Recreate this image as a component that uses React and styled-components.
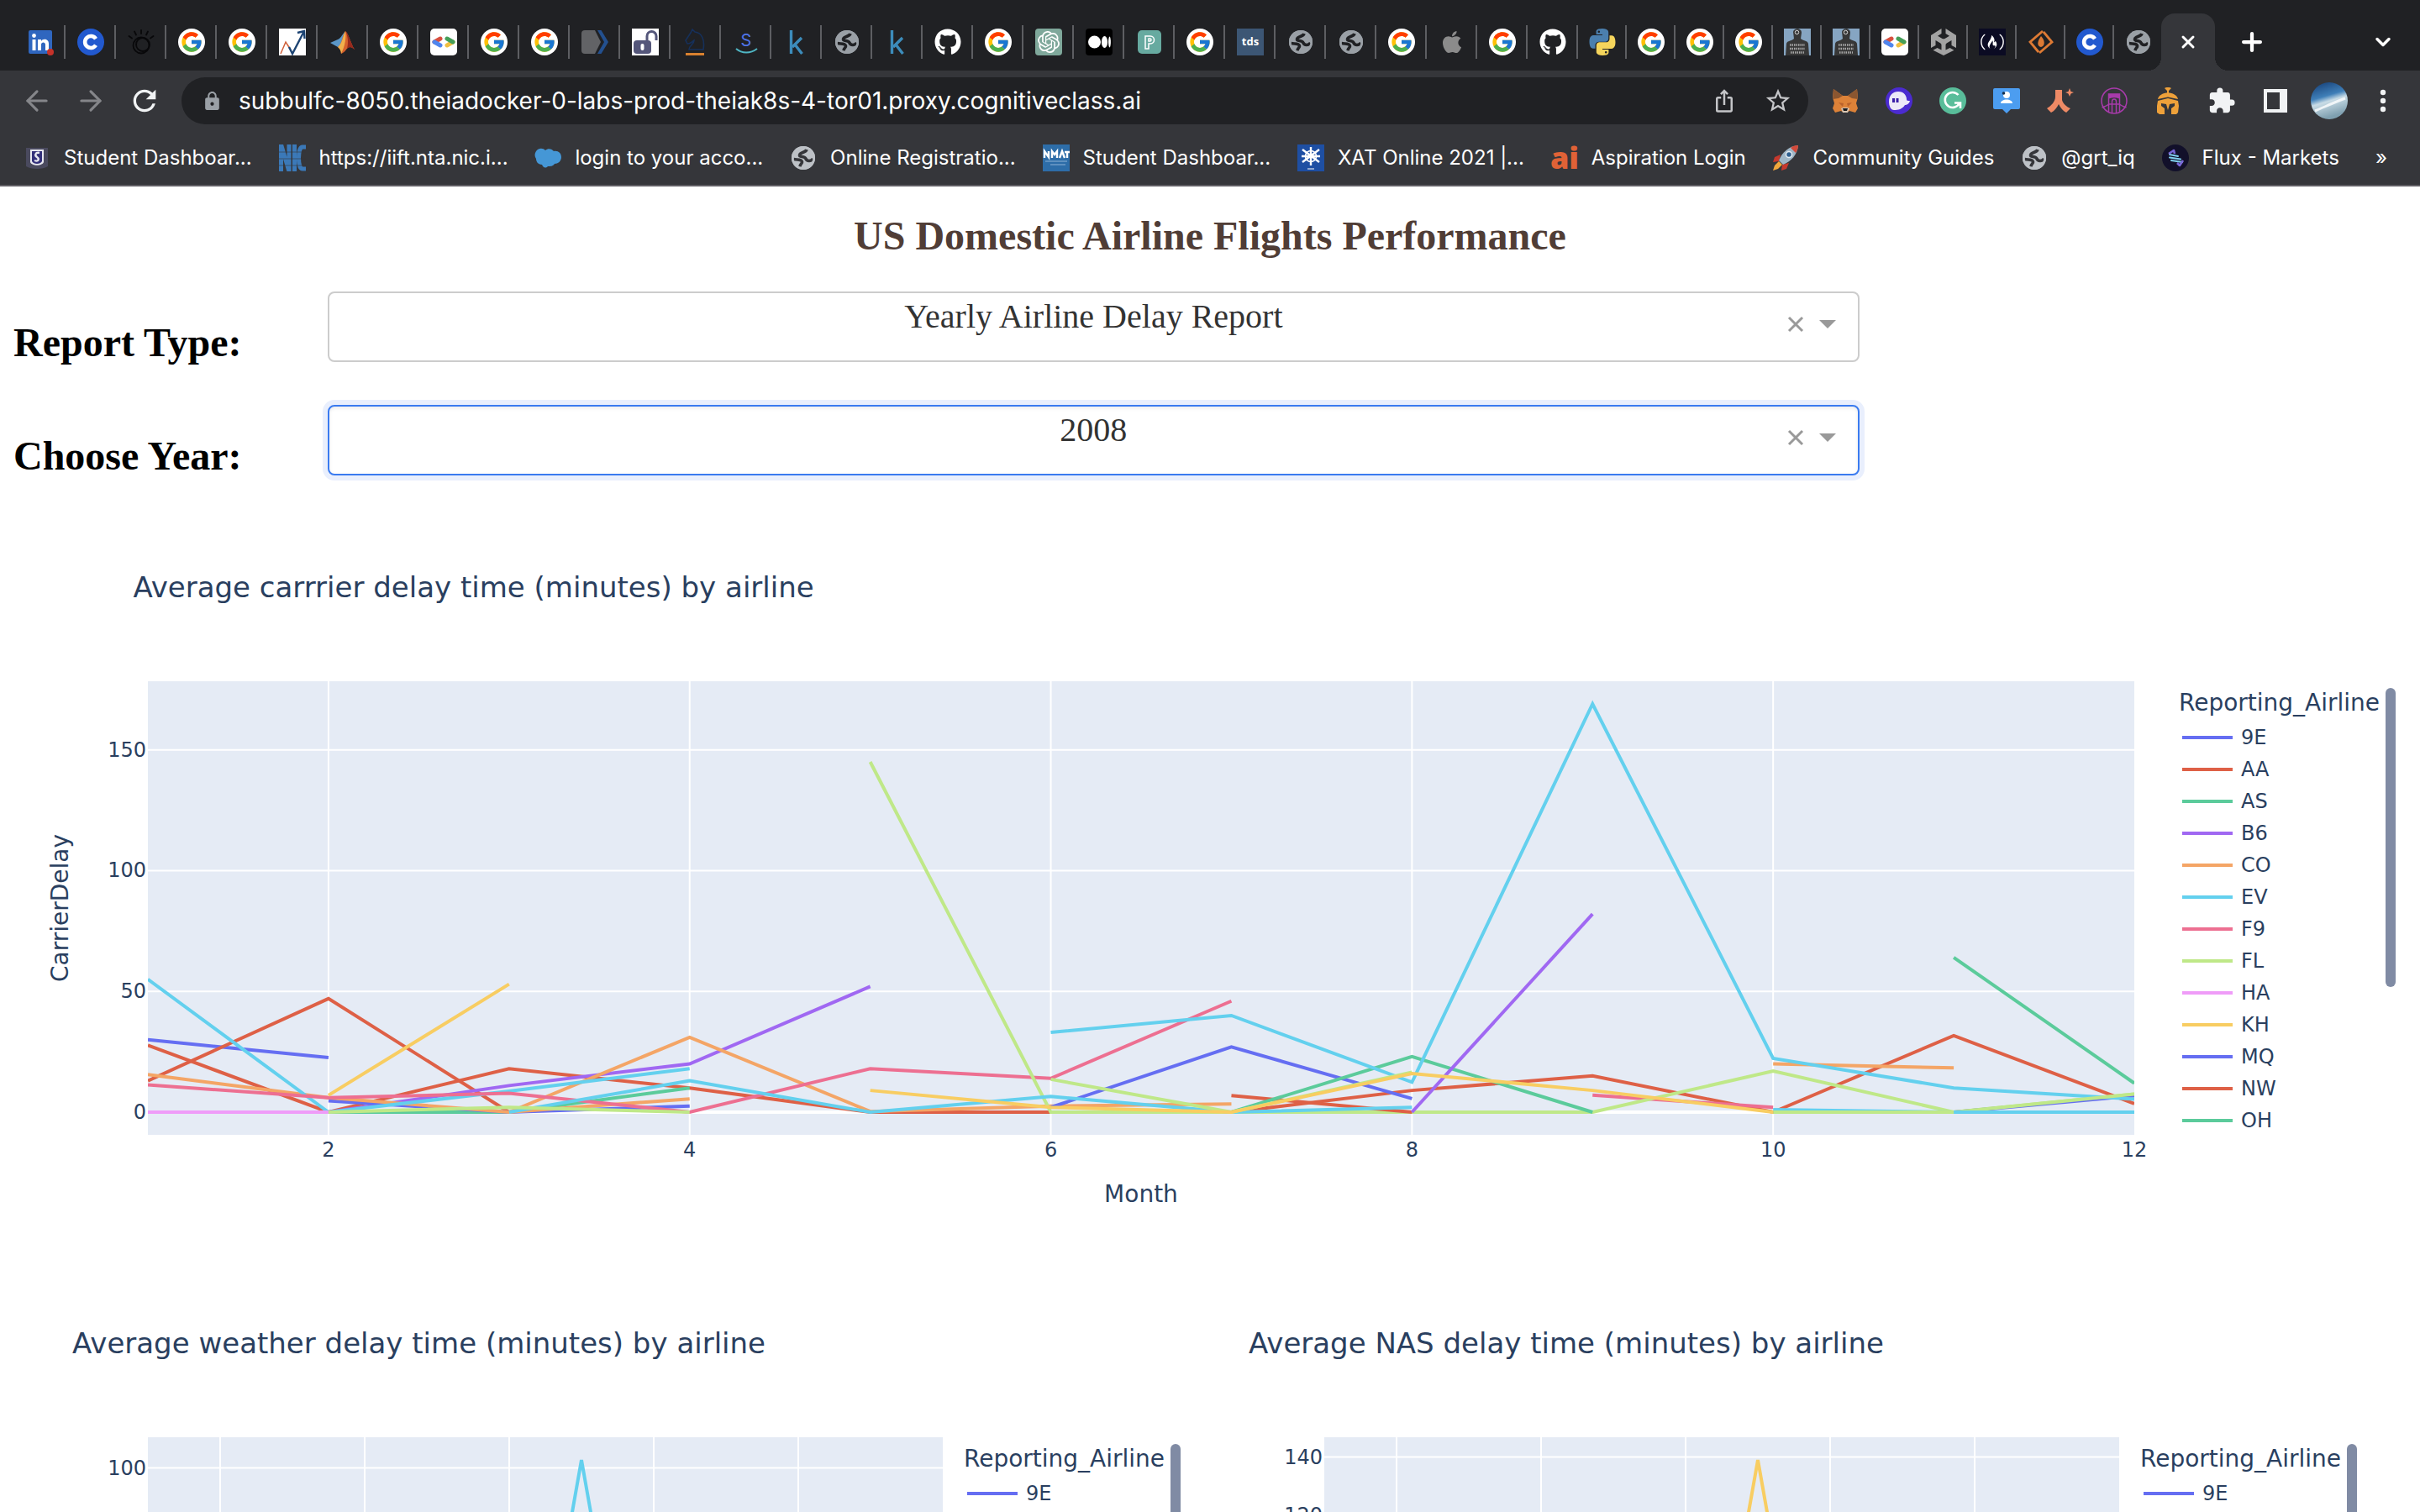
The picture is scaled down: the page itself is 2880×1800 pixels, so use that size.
import React from "react";
import styled, { createGlobalStyle } from "styled-components";
import { FcGoogle } from "react-icons/fc";
import { FaApple, FaFreeCodeCamp, FaGithub } from "react-icons/fa";
import { SiOpenai } from "react-icons/si";
import { MdExtension, MdIosShare, MdStarBorder, MdLock, MdRefresh } from "react-icons/md";
import { ArrowLeft, ArrowRight, ChevronDown, Plus, X } from "lucide-react";

const GlobalStyle = createGlobalStyle`
  * { box-sizing: border-box; }
  body { margin: 0; background: #ffffff; }
  button, input, select { font: inherit; color: inherit; }
  button { padding: 0; border: 0; background: none; }
`;

const ui = '"Inter", "Roboto", sans-serif';
const serif = '"Liberation Serif", "Times New Roman", serif';
const plotFont = '"DejaVu Sans", Verdana, sans-serif';

/* ---------- browser window ---------- */

const Window = styled.div`
  display: flex;
  flex-direction: column;
  height: 100vh;
  overflow: hidden;
`;

const TabStrip = styled.nav`
  display: flex;
  align-items: stretch;
  height: 84px;
  padding: 16px 0 0 18px;
  background: #202124;
`;

const Tab = styled.button`
  display: flex;
  align-items: center;
  justify-content: center;
  flex: none;
  width: ${(p) => (p.$narrow ? 58 : 60)}px;
  background: linear-gradient(#5d5e62, #5d5e62) right center / 2px 40px no-repeat;
  &:nth-last-child(4) {
    background: none;
  }
`;

const ActiveTab = styled.button`
  display: flex;
  align-items: center;
  justify-content: center;
  flex: none;
  width: 64px;
  margin-left: -2px;
  border-radius: 16px 16px 0 0;
  background: #35363a;
  color: #ffffff;
  position: relative;
  &::before,
  &::after {
    content: "";
    position: absolute;
    bottom: 0;
    width: 16px;
    height: 16px;
  }
  &::before {
    right: 100%;
    background: radial-gradient(circle at 0 0, #202124 16px, #35363a 16px);
  }
  &::after {
    left: 100%;
    background: radial-gradient(circle at 100% 0, #202124 16px, #35363a 16px);
  }
`;

const StripButton = styled.button`
  display: flex;
  align-items: center;
  justify-content: center;
  width: 88px;
  color: #ffffff;
  margin-left: ${(p) => (p.$end ? "auto" : "0")};
`;

const Toolbar = styled.div`
  display: flex;
  align-items: center;
  gap: 12px;
  height: 72px;
  padding: 0 12px;
  background: #35363a;
`;

const ButtonGroup = styled.div`
  display: flex;
`;

const ToolButton = styled.button`
  display: flex;
  align-items: center;
  justify-content: center;
  width: 64px;
  height: 56px;
  color: ${(p) => p.$color || "#f1f3f4"};
`;

const AddressBar = styled.div`
  display: flex;
  align-items: center;
  flex: 1;
  height: 56px;
  padding: 0 4px 0 20px;
  border-radius: 28px;
  background: #202124;
  color: #9aa0a6;
`;

const LockBox = styled.span`
  display: flex;
  justify-content: center;
  width: 32px;
  margin-right: 16px;
`;

const UrlInput = styled.input`
  flex: 1;
  min-width: 0;
  padding: 0;
  border: 0;
  outline: 0;
  background: none;
  color: #ffffff;
  font: 400 28px/40px ${ui};
`;

const BookmarkBar = styled.nav`
  display: flex;
  align-items: center;
  gap: 18px;
  height: 66px;
  padding: 0 14px 0 28px;
  border-bottom: 2px solid #5f5d63;
  background: #35363a;
  color: #ffffff;
  font: 400 24px/32px ${ui};
`;

const BookmarkList = styled.div`
  display: flex;
  flex: 1;
  justify-content: space-between;
`;

const Bookmark = styled.a`
  display: flex;
  align-items: center;
  gap: 16px;
  color: inherit;
  text-decoration: none;
  white-space: nowrap;
`;

const MoreButton = styled.button`
  width: 64px;
`;

/* ---------- dashboard page ---------- */

const Page = styled.main`
  flex: 1;
  min-height: 0;
  overflow: auto;
  scrollbar-width: none;
  padding: 30px 16px 0;
`;

const PageTitle = styled.h1`
  margin: 0 0 37px;
  color: #503d36;
  text-align: center;
  font: 700 48px/58px ${serif};
`;

const FilterRow = styled.div`
  display: grid;
  grid-template-columns: 374px 64%;
  align-items: start;
  height: 90px;
  margin-bottom: ${(p) => (p.$last ? 39 : 45)}px;
`;

const FilterLabel = styled.label`
  padding-top: 32px;
  color: #000000;
  font: 700 48px/58px ${serif};
`;

const SelectBox = styled.div`
  position: relative;
`;

const Select = styled.select`
  display: block;
  width: 100%;
  height: 84px;
  padding: 0 0 24px;
  appearance: none;
  border: 2px solid ${(p) => (p.$focused ? "#3a7bf0" : "#cccccc")};
  border-radius: 8px;
  box-shadow: ${(p) =>
    p.$focused ? "inset 0 2px 4px rgba(0, 0, 0, 0.08), 0 0 0 6px #e9effd" : "none"};
  background: #ffffff;
  outline: 0;
  color: #333333;
  text-align: center;
  text-align-last: center;
  font: 400 40px/48px ${serif};
`;

const SelectControls = styled.div`
  position: absolute;
  top: 0;
  right: 28px;
  display: flex;
  align-items: center;
  gap: 18px;
  height: 78px;
  pointer-events: none;
`;

const ClearButton = styled.button`
  display: flex;
  color: #999999;
`;

const ChartRow = styled.div`
  display: grid;
  grid-template-columns: 1fr 1fr;
  padding-right: 48px;
`;

const ChartFigure = styled.figure`
  height: 900px;
  margin: 0;
  font-family: ${plotFont};
  color: #2a3f5f;
`;

const ChartTitle = styled.figcaption`
  height: 200px;
  padding: 68px 5% 0;
  white-space: nowrap;
  font-size: 34px;
  line-height: 40px;
`;

const ChartBody = styled.div`
  display: grid;
  grid-template-columns: 160px 1fr ${(p) => (p.$wide ? 324 : 294)}px;
  height: 540px;
`;

const PlotCell = styled.div`
  grid-column: 2;
`;

const PlotSvg = styled.svg`
  display: block;
  width: 100%;
  height: 540px;
  overflow: visible;
  fill: #2a3f5f;
  font-family: ${plotFont};
`;

const Legend = styled.div`
  display: flex;
  gap: 6px;
  padding: 8px 0 0 ${(p) => (p.$wide ? 53 : 25)}px;
`;

const LegendBody = styled.div`
  width: 240px;
`;

const LegendTitle = styled.div`
  margin-bottom: 4px;
  white-space: nowrap;
  font-size: 28px;
  line-height: 36px;
`;

const LegendList = styled.ul`
  margin: 0;
  padding: 0 0 0 4px;
  list-style: none;
`;

const LegendItem = styled.li`
  display: flex;
  align-items: center;
  gap: 10px;
  height: 38px;
  font-size: 24px;
  &::before {
    content: "";
    width: 60px;
    height: 4px;
    background: ${(p) => p.$color};
  }
`;

const LegendBar = styled.div`
  width: 12px;
  height: 356px;
  border-radius: 6px;
  background: #808ba4;
`;

/* ---------- icons ---------- */

const Icon = styled.svg`
  display: block;
  flex: none;
  width: ${(p) => p.$size || 32}px;
  height: ${(p) => p.$size || 32}px;
`;

const RoundIcon = styled.span`
  display: flex;
  align-items: center;
  justify-content: center;
  width: 32px;
  height: 32px;
  border-radius: ${(p) => p.$radius || "50%"};
  background: ${(p) => p.$bg || "#ffffff"};
  color: ${(p) => p.$color || "#ffffff"};
`;

const Google = () => (
  <RoundIcon>
    <FcGoogle size={28} />
  </RoundIcon>
);

const Globe = ({ color = "#9aa0a6", hole = "#202124" }) => (
  <Icon viewBox="0 0 32 32">
    <circle cx="16" cy="16" r="14" fill={color} />
    <path
      d="M20 6c-1 4-8 3-8.500 6.500-.5 3 6 1 7.500 4.500 1.200 3 6 3.500 8.500 0"
      fill="none"
      stroke={hole}
      strokeWidth="3.600"
    />
    <path d="M4.500 17.500c4 1 9-.5 10 3 .6 2.500-2.500 2.500-2.500 6" fill="none" stroke={hole} strokeWidth="3.600" />
    <circle cx="16" cy="16" r="12.700" fill="none" stroke={color} strokeWidth="2.600" />
  </Icon>
);

const Coursera = () => (
  <Icon viewBox="0 0 32 32">
    <circle cx="16" cy="16" r="16" fill="#2259cf" />
    <path d="M22 12.200a7 7 0 1 0 0 7.600" fill="none" stroke="#fff" strokeWidth="4.600" />
  </Icon>
);

const LinkedIn = () => (
  <Icon viewBox="0 0 32 32">
    <rect x="2" y="2" width="28" height="28" rx="2" fill="#2f66bf" />
    <path d="M6.500 13h4v13h-4zM13 13h4v2c2-3.500 9-3 9 3v8h-4v-7c0-3.500-5-3.500-5 0v7h-4z" fill="#fff" />
    <circle cx="8.500" cy="8.500" r="2.400" fill="#fff" />
    <circle cx="28" cy="28" r="4" fill="#c5322a" />
  </Icon>
);

const Watson = () => (
  <Icon viewBox="0 0 32 32" fill="none" stroke="#08080a" strokeWidth="1.800" strokeLinecap="round">
    <circle cx="16" cy="20" r="9.500" />
    <circle cx="18" cy="19" r="8" />
    <path d="M16 2v4M8 3.500l2 4M24 3.500l-2 4M1.500 9l3.500 2.500M30.500 9 27 11.500" />
  </Icon>
);

const TrendChart = () => (
  <Icon viewBox="0 0 32 32">
    <path d="M0 0h32v32H0z" fill="#fff" />
    <path d="m2 30 6-14 4.500 7" fill="none" stroke="#d0603a" strokeWidth="1.500" />
    <path d="m12 22 4 8L30 3M22 5l8-2 .5 9" fill="none" stroke="#1c4372" strokeWidth="2.400" />
  </Icon>
);

const Matlab = () => (
  <Icon viewBox="0 0 32 32">
    <path d="m1 17 9-4c3-1 5-5 8-9l-3 15-5 3z" fill="#5b96c6" />
    <path d="M19 3c4 3 6 14 11 22-4-4-7-4-10 0-2 3-4 4-6 5 0-4-2-7-4-8 5-3 5-13 9-19z" fill="#d5602c" />
    <path d="M19 3c1 8 0 17-5 27 0-4-2-6-4-8 5-3 6-13 9-19z" fill="#f1b04c" />
    <path d="M19 3c3 5 4 14 2 21 3-3 6-2 9 1C25 17 23 6 19 3z" fill="#98291d" />
  </Icon>
);

const DevSite = () => (
  <Icon viewBox="0 0 32 32" strokeWidth="5" strokeLinecap="round">
    <rect width="32" height="32" rx="5" fill="#fff" />
    <path d="m12 12-7 4" stroke="#d8503f" />
    <path d="m5 16 7 4" stroke="#4f86ee" />
    <path d="m20 20 7-4" stroke="#f1bf42" />
    <path d="m27 16-7-4" stroke="#459f58" />
  </Icon>
);

const HexTag = () => (
  <Icon viewBox="0 0 32 32">
    <path d="M4 2h12l7 14-7 14H4a4 4 0 0 1-4-4V6a4 4 0 0 1 4-4z" fill="#626366" />
    <path d="M19 2h4.500L32 16l-8.500 14H19l8-14z" fill="#23508f" />
  </Icon>
);

const OpenLock = () => (
  <Icon viewBox="0 0 32 32">
    <path d="M0 0h32v32H0z" fill="#fff" />
    <rect x="2" y="14" width="21" height="16" rx="4" fill="#54567a" />
    <path d="M18 15V9a5.500 5.500 0 0 1 11 0v5" fill="none" stroke="#54567a" strokeWidth="3" />
    <rect x="10.500" y="18" width="4" height="8" rx="2" fill="#fff" />
  </Icon>
);

const Knight = () => (
  <Icon viewBox="0 0 32 32">
    <path
      d="M8 25c0-5 6-6 6-11-3 2-4 4-8 4l-2-4 6-9 2-4 3 3c8 1 12 9 10 21z"
      fill="none"
      stroke="#16305a"
      strokeWidth="1.600"
    />
    <path d="M4 29h22v3H4z" fill="#d9812f" />
  </Icon>
);

const LetterS = () => (
  <Icon viewBox="0 0 32 32">
    <text x="16" y="21" textAnchor="middle" fontFamily="Inter, sans-serif" fontSize="20" fill="#4f74e8">
      S
    </text>
    <path d="M4 24c7 6 17 6 25 0" fill="none" stroke="#4fb6c4" strokeWidth="2" />
  </Icon>
);

const Kaggle = () => (
  <Icon viewBox="0 0 32 32">
    <path d="M9.500 2v28M22 11 11 22M14 19l8.500 11" fill="none" stroke="#3c8cbb" strokeWidth="3.400" />
  </Icon>
);

const MediumMark = () => (
  <Icon viewBox="0 0 32 32">
    <rect width="32" height="32" rx="4" />
    <ellipse cx="10.500" cy="16" rx="7.500" ry="7.500" fill="#fff" />
    <ellipse cx="22.500" cy="16" rx="3.600" ry="7" fill="#fff" />
    <ellipse cx="28.500" cy="16" rx="1.400" ry="6.500" fill="#fff" />
  </Icon>
);

const LetterP = () => (
  <Icon viewBox="0 0 32 32">
    <rect x="2" y="2" width="28" height="28" rx="5" fill="#67aaa0" />
    <path d="M11 24V9h6c6 0 6 9 0 9h-2v6zM15 12v3h1.500c2 0 2-3 0-3z" fill="none" stroke="#fff" strokeWidth="1.500" />
  </Icon>
);

const Tds = () => (
  <Icon viewBox="0 0 32 32">
    <path d="M0 0h32v32H0z" fill="#3c5674" />
    <text x="16" y="20" textAnchor="middle" fontFamily="Open Sans, sans-serif" fontWeight="700" fontSize="13" fill="#fff">
      tds
    </text>
  </Icon>
);

const Python = () => (
  <Icon viewBox="0 0 32 32">
    <path
      d="M15.800 0C8 0 8.600 3.500 8.600 3.500v3.600H16v1H5.500S.5 7.500.5 15.800s4.400 8 4.400 8h2.600v-3.700s-.1-4.400 4.300-4.400h7.300s4.100.1 4.100-4V4.500S23.800 0 15.800 0zm-4 2.400a1.300 1.300 0 1 1 0 2.600 1.300 1.300 0 0 1 0-2.600z"
      fill="#4b7fae"
    />
    <path
      d="M16.200 32c7.800 0 7.200-3.500 7.200-3.500v-3.600H16v-1h10.500s5 .6 5-7.700-4.400-8-4.400-8h-2.600v3.700s.1 4.400-4.300 4.400h-7.300s-4.100-.1-4.100 4v7.200s-.6 4.500 7.400 4.500zm4-2.400a1.300 1.300 0 1 1 0-2.600 1.300 1.300 0 0 1 0 2.600z"
      fill="#f5d55c"
    />
  </Icon>
);

const Mastery = () => (
  <Icon viewBox="0 0 32 32">
    <path d="M0 0h32v32H0z" fill="#86a5c2" />
    <path d="M11 4c1-5 10-5 10 1l-1 7c4 3 8 2 9 6l1 14H2l1-14c1-4 6-3 9-6z" fill="#373737" />
    <circle cx="15.500" cy="4.500" r="2.200" fill="none" stroke="#ddd" />
    <path d="M7 19.500h18M7 24h18M8 28.500h16" stroke="#a8a8a8" strokeWidth="2.400" strokeDasharray="1.500 1" />
  </Icon>
);

const Flame = () => (
  <Icon viewBox="0 0 32 32" fill="none" stroke="#dd7a34" strokeWidth="2.800">
    <path d="M18 3 3 16l10 12M14 29l15-13L19 4" />
    <path d="M16 9c5 5 5 12 0 13-5-1-5-6 0-13z" fill="#dd7a34" stroke="none" />
  </Icon>
);

const UnityCube = () => (
  <Icon viewBox="0 0 32 32" fill="#a3a3a3">
    <path d="M13.500 0v6L9 8.700l5.500 3.200c.9.500 2.100.5 3 0L23 8.700 18.500 6V0L31 8v15l-5.500-3v-6L20 17.200c-.9.500-1.500 1.500-1.500 2.600v5.800L23.500 23l5 2.800L16 32 3.500 25.800l5-2.800 5 2.600v-5.800c0-1.100-.6-2.100-1.500-2.600L6.500 14v6L1 23V8z" />
  </Icon>
);

const Fox = () => (
  <Icon viewBox="0 0 32 32">
    <path d="m2 2 11 8h6l11-8 1 10-2 7 2 6-3 5-7-2-3 2h-4l-3-2-7 2-3-5 2-6-2-7z" fill="#dd8238" />
    <path d="m2 2 11 8-5 3-7 1zM30 2l-11 8 5 3 7 1z" fill="#8b5630" />
    <path d="m8 18 6 1-1 4zM24 18l-6 1 1 4z" fill="#b9622b" />
    <path d="m11 25 3-1h4l3 1-2 5h-6z" fill="#d8c6b4" />
    <path d="M13 25h6l-1 3h-4z" fill="#1c1c1e" />
  </Icon>
);

const Ghost = () => (
  <Icon viewBox="0 0 32 32">
    <circle cx="16" cy="16" r="16" fill="#4b2bd0" />
    <path d="M4 17C4 9 9 5 15 5c7 0 10 5 10 9 0 2 1 2 4 2-1 4-4 5-6 5-3 5-8 6-13 6-4 0-6-5-6-10z" fill="#ece9f8" />
    <path d="M9.500 13v5M14 13v5" stroke="#3a1fa8" strokeWidth="3" />
  </Icon>
);

const Grammar = () => (
  <Icon viewBox="0 0 32 32">
    <circle cx="16" cy="16" r="16" fill="#59bd9a" />
    <path d="M22.500 9a9 9 0 1 0 1.500 9.500M18 18.500h7V25" fill="none" stroke="#fff" strokeWidth="2.600" />
  </Icon>
);

const ContactCard = () => (
  <Icon viewBox="0 0 32 32">
    <path d="M2 1h28a2 2 0 0 1 2 2v21a2 2 0 0 1-2 2h-9l-5 5-5-5H2a2 2 0 0 1-2-2V3a2 2 0 0 1 2-2z" fill="#4c9df0" />
    <circle cx="16" cy="9" r="4" fill="#fff" />
    <path d="M9 19c0-6 14-6 14 0z" fill="#fff" />
    <circle cx="12.500" cy="7" r="1.800" fill="#16304c" />
  </Icon>
);

const Spark = () => (
  <Icon viewBox="0 0 32 32" fill="#ee8a65">
    <path d="M10 3h8v12c1 4 5 8 10 10l-5 5c-4-2-7-6-9-10-2 4-5 8-9 10l-5-5c5-3 10-8 10-14z" />
    <path d="m27 1 1.500 4L32 6l-3.500 1.500L27 11l-1.500-3.500L22 6l3.500-1z" />
  </Icon>
);

const Arch = () => (
  <Icon viewBox="0 0 32 32" fill="none" stroke="#a83bab" strokeWidth="1.500">
    <circle cx="16" cy="16" r="15" />
    <path d="M9.500 30V8h13v22M13.500 31V17c0-4 5-4 5 0v14M1.500 24c3-1 6-2 8-4h13c2 2 5 3 8 4" />
    <path d="M10 8.500h12v4c-3-1-9-1-12 0z" fill="#a83bab" />
  </Icon>
);

const Spartan = () => (
  <Icon viewBox="0 0 32 32" fill="#eea13a">
    <path d="M12 1c3-1.500 5-1.500 8 0l-3 3v3h-2V4z" />
    <path d="M4 14C6 4 26 4 28 14l-12-2.500z" />
    <path d="m4 16 12-3 12 3 1 6-1 8-2 2h-6V25l4-3v-3l-6 1-2 7-2-7-6-1v3l4 3v7H6l-3-2V22z" />
  </Icon>
);

const SidePanel = () => (
  <Icon viewBox="0 0 32 32" fill="none" stroke="#f1f3f4">
    <path d="M4 4h24v24H4z" strokeWidth="4" />
    <path d="M24 3v26" strokeWidth="6" />
  </Icon>
);

const Avatar = () => (
  <Icon $size={44} viewBox="0 0 44 44">
    <defs>
      <linearGradient id="sky" x1="0" y1="0" x2="0.3" y2="1">
        <stop offset="0" stopColor="#123a72" />
        <stop offset="0.45" stopColor="#3f7fb8" />
        <stop offset="0.6" stopColor="#c9dce6" />
        <stop offset="1" stopColor="#7fa0b0" />
      </linearGradient>
    </defs>
    <circle cx="22" cy="22" r="22" fill="url(#sky)" />
    <path d="M5 34c10-4 20-9 36-15" stroke="#fff" strokeWidth="3" fill="none" opacity="0.800" />
  </Icon>
);

const Dots = () => (
  <Icon viewBox="0 0 32 32" fill="#f1f3f4">
    <circle cx="16" cy="6" r="3.200" />
    <circle cx="16" cy="16" r="3.200" />
    <circle cx="16" cy="26" r="3.200" />
  </Icon>
);

const Shield = () => (
  <Icon viewBox="0 0 32 32">
    <path d="M3 4h26v22c-6 4-20 4-26 0z" fill="#4a4a5e" />
    <path d="M8 6h16v15c-2 5-14 5-16 0z" fill="#e8e8f0" />
    <path d="M10 8h12v12c-2 4-10 4-12 0z" fill="#33307a" />
    <path d="M19 10c-5-1-6 3-3 5s2 6-3 4" fill="none" stroke="#e8e8f0" strokeWidth="2.400" />
  </Icon>
);

const Nic = () => (
  <Icon viewBox="0 0 32 32" fill="none" stroke="#3b79b8" strokeWidth="5">
    <path d="M2.500 32V0L12 32V0M18.500 0v32M32 3h-4c-6 0-6 26 0 26h4" />
    <path d="M0 9h32M0 17h32M0 25h32" stroke="#35363a" strokeWidth="0.600" />
  </Icon>
);

const Cloud = () => (
  <Icon viewBox="0 0 32 32">
    <path d="M2 8c3-4 8-4 11-1 3-3 8-2 10 1 5-1 9 2 9 7s-4 8-8 8c-2 3-5 3-8 3-3 3-6 1-7-2-5 0-7-4-7-7-2-3-2-6 0-9z" fill="#4597d6" />
  </Icon>
);

const Banner = () => (
  <Icon viewBox="0 0 32 32">
    <path d="M0 0h32v32H0z" fill="#2d6da8" />
    <path d="M2 16V8l5 7V8M11 16V8l3 4 3-4v8M20 16l3-8 3 8M26 9h6M29 9v7" fill="none" stroke="#fff" strokeWidth="2.400" />
    <path d="M3 20h26M9 24h18" stroke="#8fb4d6" />
  </Icon>
);

const Emblem = () => (
  <Icon viewBox="0 0 32 32">
    <path d="M0 0h32v32H0z" fill="#1e4fa3" />
    <path d="M16 3v22M6 6l20 15M26 6 6 21M5 14h22" stroke="#fff" strokeWidth="2.400" />
    <circle cx="16" cy="14" r="6.500" fill="none" stroke="#fff" strokeWidth="1.600" />
    <path d="M12 29h8" stroke="#fff" />
  </Icon>
);

const Ai = () => (
  <Icon viewBox="0 0 32 32">
    <text x="16" y="29" textAnchor="middle" fontFamily="Open Sans, sans-serif" fontWeight="800" fontSize="36" fill="#e06236">
      ai
    </text>
  </Icon>
);

const Rocket = () => (
  <Icon viewBox="0 0 32 32">
    <path d="M10 12 3 15l-2 6 7-1zM20 22l-3 7-6 2 1-7z" fill="#c5382d" />
    <path d="M31 1C20 2 12 9 8 19l5 5C23 20 30 12 31 1z" fill="#9fb6c6" />
    <path d="M31 1c-4 0-7 1-9 3l6 6c2-3 3-6 3-9z" fill="#d24a3a" />
    <circle cx="20" cy="12" r="3.500" fill="#2d5f8f" stroke="#e5edf2" strokeWidth="1.500" />
    <path d="m8 20 4 4-5 5-6 2 2-6z" fill="#f2a83c" />
  </Icon>
);

const Flux = () => (
  <Icon viewBox="0 0 32 32">
    <circle cx="16" cy="16" r="16" fill="#12102a" />
    <path d="m9 12 10 2M9 15.500l13 2M11 19l13 2" stroke="#7fd0ee" strokeWidth="2" strokeLinecap="round" />
    <path d="m8 11 6-4 1 4M25 19l-4 6-3-3" fill="none" stroke="#7a68d8" strokeWidth="2.600" strokeLinejoin="round" />
  </Icon>
);

const OpenAi = () => (
  <RoundIcon $bg="#7fa89b" $radius="4px">
    <SiOpenai size={26} />
  </RoundIcon>
);
const Camp = () => (
  <RoundIcon $bg="#0b0b23" $radius="0">
    <FaFreeCodeCamp size={28} />
  </RoundIcon>
);
const Github = () => <FaGithub size={32} color="#ffffff" />;
const Apple = () => <FaApple size={30} color="#8b8b8b" />;

const TABS = [
  ["LinkedIn", LinkedIn], ["Coursera", Coursera], ["Watson", Watson], ["Google", Google],
  ["Google", Google], ["Trends", TrendChart], ["MATLAB", Matlab], ["Google", Google],
  ["Developers", DevSite], ["Google", Google], ["Google", Google], ["Tag", HexTag],
  ["Unlock", OpenLock], ["Knight", Knight], ["S", LetterS], ["Kaggle", Kaggle],
  ["Site", Globe], ["Kaggle", Kaggle], ["GitHub", Github], ["Google", Google],
  ["OpenAI", OpenAi], ["Medium", MediumMark], ["P", LetterP], ["Google", Google],
  ["TDS", Tds], ["Site", Globe], ["Site", Globe], ["Google", Google],
  ["Apple", Apple], ["Google", Google], ["GitHub", Github], ["Python", Python],
  ["Google", Google], ["Google", Google], ["Google", Google], ["Mastery", Mastery],
  ["Mastery", Mastery], ["Developers", DevSite], ["Unity", UnityCube], ["freeCodeCamp", Camp],
  ["Flame", Flame], ["Coursera", Coursera], ["Site", Globe],
];
const WIDE_TABS = 31;

const EXTENSIONS = [
  ["Fox wallet", Fox], ["Ghost wallet", Ghost], ["Grammar", Grammar], ["Contacts", ContactCard],
  ["Spark", Spark], ["Arch", Arch], ["Spartan", Spartan],
  ["Extensions", () => <MdExtension size={34} />],
  ["Side panel", SidePanel], ["Profile", Avatar], ["Menu", Dots],
];

const LightGlobe = () => <Globe color="#bdc1c6" hole="#35363a" />;

const BOOKMARKS = [
  ["Student Dashboar...", Shield],
  ["https://iift.nta.nic.i...", Nic],
  ["login to your acco...", Cloud],
  ["Online Registratio...", LightGlobe],
  ["Student Dashboar...", Banner],
  ["XAT Online 2021 |...", Emblem],
  ["Aspiration Login", Ai],
  ["Community Guides", Rocket],
  ["@grt_iq", LightGlobe],
  ["Flux - Markets", Flux],
];

/* ---------- chart data ---------- */

const C = {
  blue: "#656ef2", red: "#de6046", green: "#5bcb9b", purple: "#a068f2", orange: "#f4a566",
  cyan: "#63d0ee", pink: "#ed6f91", lime: "#bfe888", magenta: "#ef9cf8", yellow: "#f8cd62",
};

const AIRLINES = [
  ["9E", C.blue], ["AA", C.red], ["AS", C.green], ["B6", C.purple], ["CO", C.orange],
  ["EV", C.cyan], ["F9", C.pink], ["FL", C.lime], ["HA", C.magenta], ["KH", C.yellow],
  ["MQ", C.blue], ["NW", C.red], ["OH", C.green],
];

const CARRIER = [
  [C.blue, [[1, 30], [2, 22.6]]],
  [C.red, [[1, 13], [2, 47], [3, 0]]],
  [C.red, [[1, 27.7], [2, 0], [3, 18], [4, 10], [5, 0], [6, 0]]],
  [C.red, [[7, 0], [8, 9], [9, 15], [10, 0], [11, 31.7], [12, 3.5]]],
  [C.green, [[2, 0], [3, 0], [4, 10]]],
  [C.purple, [[2, 0], [3, 11], [4, 20], [5, 52]]],
  [C.blue, [[2, 4.7], [3, 0], [4, 2.5]]],
  [C.orange, [[3, 0], [4, 5.5]]],
  [C.orange, [[1, 15.6], [2, 6], [3, 0], [4, 31], [5, 0.3], [6, 2.5], [7, 3.4]]],
  [C.orange, [[10, 20], [11, 18.3]]],
  [C.cyan, [[1, 55], [2, 0], [3, 8.7], [4, 18]]],
  [C.pink, [[1, 11.3], [2, 6], [3, 7.8], [4, 0], [5, 18], [6, 14], [7, 46]]],
  [C.pink, [[9, 7], [10, 2]]],
  [C.lime, [[5, 145], [6, 0], [7, 0], [8, 0], [9, 0], [10, 17], [11, 0], [12, 7.5]]],
  [C.magenta, [[1, 0], [2, 0]]],
  [C.yellow, [[2, 7], [3, 53]]],
  [C.blue, [[6, 2], [7, 27], [8, 5.6]]],
  [C.red, [[7, 6.9], [8, 0]]],
  [C.green, [[7, 0], [8, 23], [9, 0]]],
  [C.green, [[11, 64], [12, 12]]],
  [C.purple, [[8, 0], [9, 82]]],
  [C.blue, [[11, 0], [12, 6.8]]],
  [C.cyan, [[3, 0], [4, 13], [5, 0], [6, 6.5], [7, 0], [8, 2]]],
  [C.cyan, [[6, 33], [7, 40], [8, 12.4], [9, 169], [10, 22.3], [11, 10], [12, 5.4]]],
  [C.cyan, [[10, 1], [11, 0], [12, 0]]],
  [C.lime, [[2, 0], [3, 2], [4, 0]]],
  [C.lime, [[6, 13.6], [7, 0], [8, 16.5]]],
  [C.lime, [[10, 0], [11, 0], [12, 7.5]]],
  [C.cyan, [[11, 0], [12, 0]]],
  [C.yellow, [[5, 9], [6, 2], [7, 0], [8, 16], [9, 9], [10, 0]]],
];

const WEATHER = [[C.cyan, [[6, 0], [7, 102], [8, 0]]]];
const NAS = [[C.yellow, [[6, 0], [7, 139], [8, 0]]]];

const MONTHS = [2, 4, 6, 8, 10, 12];

function Chart({ title, yTitle, max, yTicks, series, wide }) {
  const pad = max / 18;
  const span = max + 2 * pad;
  const xPct = (m) => ((m - 1) / 11) * 100;
  const yPct = (v) => ((max + pad - v) / span) * 100;
  return (
    <ChartFigure>
      <ChartTitle>{title}</ChartTitle>
      <ChartBody $wide={wide}>
        <PlotCell>
          <PlotSvg role="img" aria-label={title}>
            <rect width="100%" height="100%" fill="#e5ebf5" />
            {MONTHS.slice(0, -1).map((m) => (
              <line key={m} x1={`${xPct(m)}%`} x2={`${xPct(m)}%`} y1="0" y2="100%" stroke="#fff" strokeWidth="2" />
            ))}
            {yTicks.map((v) => (
              <line
                key={v}
                x1="0"
                x2="100%"
                y1={`${yPct(v)}%`}
                y2={`${yPct(v)}%`}
                stroke="#fff"
                strokeWidth={v === 0 ? 4 : 2}
              />
            ))}
            <svg width="100%" height="100%" viewBox="0 0 100 100" preserveAspectRatio="none">
              {series.map(([color, points], i) => (
                <polyline
                  key={i}
                  points={points.map(([m, v]) => `${xPct(m)},${yPct(v)}`).join(" ")}
                  fill="none"
                  stroke={color}
                  strokeWidth="4"
                  vectorEffect="non-scaling-stroke"
                />
              ))}
            </svg>
            {yTicks.map((v) => (
              <text key={v} x="-2" y={`${yPct(v)}%`} dy="8" textAnchor="end" fontSize="24">
                {v}
              </text>
            ))}
            {MONTHS.map((m) => (
              <text key={m} x={`${xPct(m)}%`} y="100%" dy="26" textAnchor="middle" fontSize="24">
                {m}
              </text>
            ))}
            <text x="50%" y="100%" dy="80" textAnchor="middle" fontSize="28">
              Month
            </text>
            <text transform="translate(-95 270) rotate(-90)" textAnchor="middle" fontSize="28">
              {yTitle}
            </text>
          </PlotSvg>
        </PlotCell>
        <Legend $wide={wide}>
          <LegendBody>
            <LegendTitle>Reporting_Airline</LegendTitle>
            <LegendList>
              {AIRLINES.map(([code, color]) => (
                <LegendItem key={code} $color={color}>
                  {code}
                </LegendItem>
              ))}
            </LegendList>
          </LegendBody>
          <LegendBar />
        </Legend>
      </ChartBody>
    </ChartFigure>
  );
}

function Filter({ id, label, options, focused, last }) {
  return (
    <FilterRow $last={last}>
      <FilterLabel htmlFor={id}>{label}</FilterLabel>
      <SelectBox>
        <Select id={id} $focused={focused}>
          {options.map((o) => (
            <option key={o}>{o}</option>
          ))}
        </Select>
        <SelectControls>
          <ClearButton aria-label={`Clear ${label}`}>
            <svg width="20" height="20" viewBox="0 0 20 20" stroke="currentColor" strokeWidth="3">
              <path d="m2 2 16 16M18 2 2 18" />
            </svg>
          </ClearButton>
          <svg width="20" height="10" viewBox="0 0 20 10" fill="#999999" aria-hidden="true">
            <path d="M0 0h20L10 10z" />
          </svg>
        </SelectControls>
      </SelectBox>
    </FilterRow>
  );
}

export default function App() {
  return (
    <Window>
      <GlobalStyle />
      <TabStrip aria-label="Tabs">
        {TABS.map(([name, Glyph], i) => (
          <Tab key={i} aria-label={name} $narrow={i >= WIDE_TABS}>
            <Glyph />
          </Tab>
        ))}
        <ActiveTab aria-label="Close tab">
          <X size={24} strokeWidth={3} />
        </ActiveTab>
        <StripButton aria-label="New tab">
          <Plus size={34} strokeWidth={3} />
        </StripButton>
        <StripButton aria-label="Search tabs" $end>
          <ChevronDown size={28} strokeWidth={3} />
        </StripButton>
      </TabStrip>
      <Toolbar>
        <ButtonGroup>
          <ToolButton aria-label="Back" $color="#85868a">
            <ArrowLeft size={38} strokeWidth={2} />
          </ToolButton>
          <ToolButton aria-label="Forward" $color="#85868a">
            <ArrowRight size={38} strokeWidth={2} />
          </ToolButton>
          <ToolButton aria-label="Reload">
            <MdRefresh size={40} />
          </ToolButton>
        </ButtonGroup>
        <AddressBar>
          <LockBox>
            <MdLock size={25} />
          </LockBox>
          <UrlInput
            aria-label="Address"
            defaultValue="subbulfc-8050.theiadocker-0-labs-prod-theiak8s-4-tor01.proxy.cognitiveclass.ai"
          />
          <ToolButton aria-label="Share" $color="#c4c5c8">
            <MdIosShare size={30} />
          </ToolButton>
          <ToolButton aria-label="Bookmark this page" $color="#c4c5c8">
            <MdStarBorder size={34} />
          </ToolButton>
        </AddressBar>
        <ButtonGroup>
          {EXTENSIONS.map(([name, Glyph]) => (
            <ToolButton key={name} aria-label={name}>
              <Glyph />
            </ToolButton>
          ))}
        </ButtonGroup>
      </Toolbar>
      <BookmarkBar aria-label="Bookmarks">
        <BookmarkList>
          {BOOKMARKS.map(([name, Glyph], i) => (
            <Bookmark key={i} href="#">
              <Glyph />
              {name}
            </Bookmark>
          ))}
        </BookmarkList>
        <MoreButton aria-label="More bookmarks">»</MoreButton>
      </BookmarkBar>
      <Page>
        <PageTitle>US Domestic Airline Flights Performance</PageTitle>
        <Filter
          id="report-type"
          label="Report Type:"
          options={["Yearly Airline Delay Report"]}
        />
        <Filter id="year" label="Choose Year:" options={["2008"]} focused last />
        <Chart
          wide
          title="Average carrrier delay time (minutes) by airline"
          yTitle="CarrierDelay"
          max={169}
          yTicks={[0, 50, 100, 150]}
          series={CARRIER}
        />
        <ChartRow>
          <Chart
            title="Average weather delay time (minutes) by airline"
            yTitle="WeatherDelay"
            max={102}
            yTicks={[0, 50, 100]}
            series={WEATHER}
          />
          <Chart
            title="Average NAS delay time (minutes) by airline"
            yTitle="NASDelay"
            max={139}
            yTicks={[0, 20, 40, 60, 80, 100, 120, 140]}
            series={NAS}
          />
        </ChartRow>
      </Page>
    </Window>
  );
}
